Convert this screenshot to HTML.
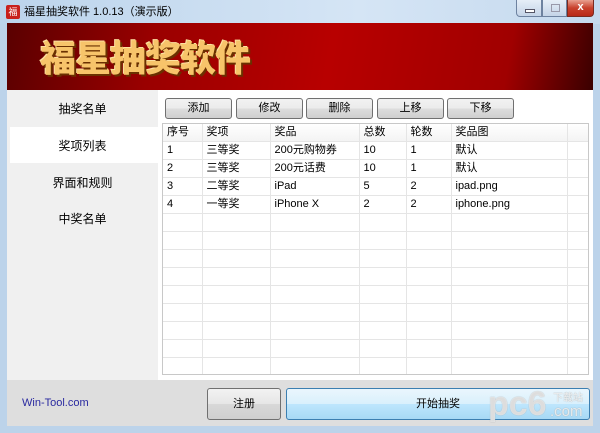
<!DOCTYPE html><html><head><meta charset="utf-8"><style>
body{margin:0;width:600px;height:433px;overflow:hidden;background:#bcd3ea;font-family:"Liberation Sans","Noto Sans CJK SC",sans-serif;font-size:11px;color:#000;position:relative}
.a{position:absolute}
.btn{position:absolute;border:1px solid #707070;border-radius:3px;background:linear-gradient(#f2f2f2,#ebebeb 50%,#dddddd 50%,#cfcfcf);text-align:center;box-sizing:border-box}
td{border-right:1px solid #e5e5e5;border-bottom:1px solid #e5e5e5;height:17px;line-height:17px;padding:0 0 0 4px;font-size:11px;white-space:nowrap;overflow:hidden;vertical-align:middle}
td span{display:inline-block;line-height:17px;height:17px;vertical-align:top}
table{border-collapse:collapse;table-layout:fixed}
</style></head><body>
<div class="a" style="left:0;top:0;width:600px;height:24px;background:linear-gradient(90deg,#bcd4ec,#d5e5f5 60%,#c5d9ee)"></div>
<div class="a" style="left:6px;top:5px;width:14px;height:14px;background:#c8201c;border-radius:2px;color:#fff;font-size:9px;text-align:center;line-height:14px">福</div>
<div class="a" style="left:24px;top:5px;font-size:11px;line-height:14px">福星抽奖软件 1.0.13（演示版）</div>
<div class="a" style="left:516px;top:0;width:26px;height:17px;border:1px solid #6d82a0;border-top:0;border-radius:0 0 0 4px;background:linear-gradient(#e6eef8,#c4d4e8);box-sizing:border-box"><div class="a" style="left:8px;top:9px;width:8px;height:2px;background:#fff;border:1px solid #556"></div></div>
<div class="a" style="left:542px;top:0;width:25px;height:17px;border:1px solid #6d82a0;border-top:0;background:linear-gradient(#e6eef8,#c4d4e8);box-sizing:border-box"><div class="a" style="left:8px;top:4px;width:7px;height:6px;border:1px solid #99a"></div></div>
<div class="a" style="left:567px;top:0;width:27px;height:17px;border:1px solid #7a2a20;border-top:0;border-radius:0 0 4px 0;background:linear-gradient(#e8a090,#c8402c 50%,#b82818);box-sizing:border-box;color:#fff;font-weight:bold;text-align:center;font-size:11px;line-height:15px">x</div>
<div class="a" style="left:7px;top:23px;width:586px;height:67px;background:linear-gradient(100deg,#5a0000 0%,#9a0000 25%,#b80000 55%,#a00000 85%,#3a0000 100%)"></div>
<div class="a" style="left:40px;top:33px;font-size:36px;line-height:46px;font-weight:900;color:#f7c46a;letter-spacing:-1px;font-family:'Noto Sans CJK SC',sans-serif;text-shadow:2px 2px 0 #6a3000,-1px -1px 0 #fde0a0">福星抽奖软件</div>
<div class="a" style="left:7px;top:90px;width:151px;height:290px;background:#f0f0f0"></div>
<div class="a" style="left:10px;top:127px;width:148px;height:36px;background:#fff"></div>
<div class="a" style="left:7px;top:100px;width:151px;text-align:center;font-size:12px">抽奖名单</div>
<div class="a" style="left:7px;top:137px;width:151px;text-align:center;font-size:12px">奖项列表</div>
<div class="a" style="left:7px;top:174px;width:151px;text-align:center;font-size:12px">界面和规则</div>
<div class="a" style="left:7px;top:210px;width:151px;text-align:center;font-size:12px">中奖名单</div>
<div class="a" style="left:158px;top:90px;width:435px;height:290px;background:#fff"></div>
<div class="btn" style="left:165px;top:98px;width:67px;height:21px;line-height:19px">添加</div>
<div class="btn" style="left:236px;top:98px;width:67px;height:21px;line-height:19px">修改</div>
<div class="btn" style="left:306px;top:98px;width:67px;height:21px;line-height:19px">删除</div>
<div class="btn" style="left:377px;top:98px;width:67px;height:21px;line-height:19px">上移</div>
<div class="btn" style="left:447px;top:98px;width:67px;height:21px;line-height:19px">下移</div>
<div class="a" style="left:162px;top:123px;width:427px;height:252px;border:1px solid #c8c8c8;overflow:hidden;box-sizing:border-box">
<table style="width:440px"><colgroup><col style="width:39px"><col style="width:68px"><col style="width:89px"><col style="width:47px"><col style="width:45px"><col style="width:116px"><col style="width:36px"></colgroup>
<tr style="background:linear-gradient(#fff,#f3f3f3)"><td><span>序号</span></td><td><span>奖项</span></td><td><span>奖品</span></td><td><span>总数</span></td><td><span>轮数</span></td><td><span>奖品图</span></td><td></td></tr>
<tr><td><span>1</span></td><td><span>三等奖</span></td><td><span>200元购物券</span></td><td><span>10</span></td><td><span>1</span></td><td><span>默认</span></td><td></td></tr>
<tr><td><span>2</span></td><td><span>三等奖</span></td><td><span>200元话费</span></td><td><span>10</span></td><td><span>1</span></td><td><span>默认</span></td><td></td></tr>
<tr><td><span>3</span></td><td><span>二等奖</span></td><td><span>iPad</span></td><td><span>5</span></td><td><span>2</span></td><td><span>ipad.png</span></td><td></td></tr>
<tr><td><span>4</span></td><td><span>一等奖</span></td><td><span>iPhone X</span></td><td><span>2</span></td><td><span>2</span></td><td><span>iphone.png</span></td><td></td></tr>
<tr><td></td><td></td><td></td><td></td><td></td><td></td><td></td></tr><tr><td></td><td></td><td></td><td></td><td></td><td></td><td></td></tr><tr><td></td><td></td><td></td><td></td><td></td><td></td><td></td></tr><tr><td></td><td></td><td></td><td></td><td></td><td></td><td></td></tr><tr><td></td><td></td><td></td><td></td><td></td><td></td><td></td></tr><tr><td></td><td></td><td></td><td></td><td></td><td></td><td></td></tr><tr><td></td><td></td><td></td><td></td><td></td><td></td><td></td></tr><tr><td></td><td></td><td></td><td></td><td></td><td></td><td></td></tr><tr><td></td><td></td><td></td><td></td><td></td><td></td><td></td></tr><tr><td></td><td></td><td></td><td></td><td></td><td></td><td></td></tr>
</table></div>
<div class="a" style="left:7px;top:380px;width:586px;height:46px;background:#dedede"></div>
<div class="a" style="left:22px;top:397px;color:#2a2aa0;font-size:11px">Win-Tool.com</div>
<div class="btn" style="left:207px;top:388px;width:74px;height:32px;line-height:30px;background:linear-gradient(#f2f2f2,#e6e6e6 50%,#d8d8d8 50%,#cfcfcf)">注册</div>
<div class="btn" style="left:286px;top:388px;width:304px;height:32px;line-height:30px;border-color:#3c7fb1;background:linear-gradient(#eaf6fd,#d9f0fc 50%,#bee6fd 50%,#a7d9f5)">开始抽奖</div>
<div class="a" style="left:488px;top:385px;font-size:34px;font-weight:bold;color:rgba(255,255,255,.6);font-family:'Liberation Sans',sans-serif;text-shadow:0 0 1px #aaa">pc6</div>
<div class="a" style="left:553px;top:389px;font-size:10px;color:rgba(255,255,255,.8);text-shadow:0 0 1px #999">下载站</div>
<div class="a" style="left:550px;top:403px;font-size:15px;color:rgba(255,255,255,.75);text-shadow:0 0 1px #999">.com</div>
</body></html>
